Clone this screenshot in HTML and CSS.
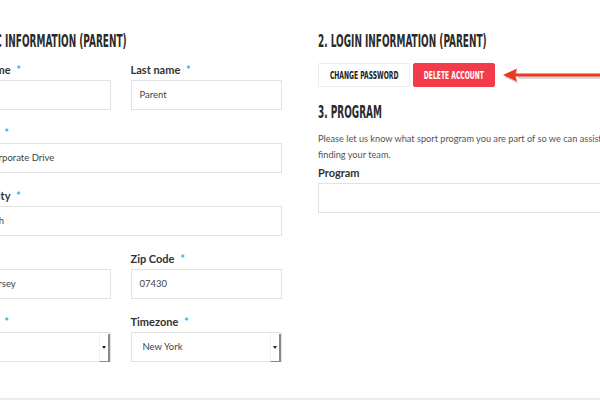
FILE: index.html
```html
<!DOCTYPE html>
<html lang="en">
<head>
  <meta charset="UTF-8">
  <meta name="viewport" content="width=device-width, initial-scale=1.0">
  <title>My Account</title>
  <link rel="stylesheet" href="styles.css">
</head>
<body>
  <div class="page">
    <section class="column column-main">
      <h2 class="heading"><span>1. Basic Information (Parent)</span></h2>

      <div class="row">
        <div class="field">
          <label>First name <i>*</i></label>
          <div class="input">Test</div>
        </div>
        <div class="field">
          <label>Last name <i>*</i></label>
          <div class="input">Parent</div>
        </div>
      </div>

      <div class="field">
        <label>Address <i>*</i></label>
        <div class="input">123 Corporate Drive</div>
      </div>

      <div class="field">
        <label>Town/City <i>*</i></label>
        <div class="input">Mahwah</div>
      </div>

      <div class="row">
        <div class="field">
          <label>State <i>*</i></label>
          <div class="input">New Jersey</div>
        </div>
        <div class="field">
          <label>Zip Code <i>*</i></label>
          <div class="input">07430</div>
        </div>
      </div>

      <div class="row">
        <div class="field">
          <label>Country <i>*</i></label>
          <div class="input select">
            <span>USA</span>
            <b class="select-btn"></b>
          </div>
        </div>
        <div class="field">
          <label>Timezone <i>*</i></label>
          <div class="input select">
            <span>New York</span>
            <b class="select-btn"></b>
          </div>
        </div>
      </div>
    </section>

    <section class="column">
      <h2 class="heading"><span>2. Login Information (Parent)</span></h2>

      <div class="actions">
        <button class="btn"><span>Change Password</span></button>
        <button class="btn btn-danger"><span>Delete Account</span></button>
        <svg class="arrow" width="110" height="20" viewBox="0 0 110 20">
          <path d="M16 10 H110" stroke="#000" stroke-opacity=".18" stroke-width="3.5" transform="translate(1 2)"/>
          <path d="M2 10 L16 3.5 L14 10 L16 16.5 Z" fill="#000" fill-opacity=".18" transform="translate(1 2)"/>
          <path d="M14 10 H110" stroke="#ec3a1e" stroke-width="3"/>
          <path d="M2 10 L16 3.5 L14 10 L16 16.5 Z" fill="#ec3a1e"/>
        </svg>
      </div>

      <h2 class="heading heading-small"><span>3. Program</span></h2>

      <p class="note">Please let us know what sport program you are part of so we can assist you in finding your team.</p>

      <div class="field">
        <label>Program</label>
        <div class="input"></div>
      </div>
    </section>
  </div>
</body>
</html>
```

FILE: styles.css
```css
body {
  margin: 0;
  padding: 0;
  background: #fff;
  font-family: 'Lato', sans-serif;
  color: #333;
  overflow: hidden;
}

.page {
  display: flex;
  gap: 36px;
  margin-left: -41px;
  padding-top: 31px;
  height: 367px;
  border-bottom: 2px solid #ececec;
}

.column {
  width: 322px;
  flex-shrink: 0;
}

.column-main {
  width: 323px;
}

.heading {
  margin: 0 0 12px;
  height: 20px;
  font-family: 'DejaVu Sans Condensed', 'DejaVu Sans', sans-serif;
  font-size: 17px;
  line-height: 20px;
  font-weight: bold;
  text-transform: uppercase;
  color: #2a2a2a;
  white-space: nowrap;
}

.heading span {
  display: inline-block;
  transform: scaleX(0.586);
  transform-origin: left center;
}

.row {
  display: grid;
  grid-template-columns: 1fr 1fr;
  gap: 20px;
}

.field {
  margin-bottom: 16px;
}

.field label {
  display: block;
  margin-bottom: 3px;
  font-size: 11px;
  line-height: 14px;
  font-weight: bold;
  color: #333;
}

.field label i {
  font-style: normal;
  color: #2bb8d8;
  margin-left: 3px;
}

.input {
  height: 28px;
  border: 1px solid #e2e2e2;
  padding: 0 8px;
  font-size: 9.5px;
  line-height: 28px;
  color: #444;
  background: #fff;
}

.select {
  display: flex;
  align-items: center;
  padding: 0 0 0 11px;
}

.select span {
  flex: 1;
}

.select-btn {
  width: 8px;
  height: 27px;
  margin-top: 1px;
  border-left: 1px solid #f0f0f0;
  border-right: 2px solid #8a8a8a;
  border-bottom: 1px solid #8a8a8a;
  display: flex;
  align-items: center;
  justify-content: center;
}

.select-btn::after {
  content: '';
  border-left: 2px solid transparent;
  border-right: 2px solid transparent;
  border-top: 3px solid #222;
}

.actions {
  display: flex;
  align-items: center;
  margin-bottom: 15px;
}

.btn {
  height: 24px;
  padding: 0;
  border: 1px solid #ebebeb;
  border-radius: 2px;
  background: #fff;
  color: #222;
  font-family: 'DejaVu Sans Condensed', 'DejaVu Sans', sans-serif;
  font-size: 10px;
  font-weight: bold;
  text-transform: uppercase;
  width: 92px;
  cursor: pointer;
  overflow: hidden;
  white-space: nowrap;
}

.btn span {
  display: inline-block;
  margin: 0 -20px;
  transform: scaleX(0.67);
}

.btn-danger {
  width: 82px;
  margin-left: 3px;
  background: #f23b4b;
  border-color: #f23b4b;
  color: #fff;
}

.arrow {
  margin-left: 6px;
  flex-shrink: 0;
}

.heading-small {
  margin-bottom: 9px;
}

.note {
  margin: 0 0 3px;
  font-size: 9.2px;
  line-height: 16px;
  color: #555;
}
```
